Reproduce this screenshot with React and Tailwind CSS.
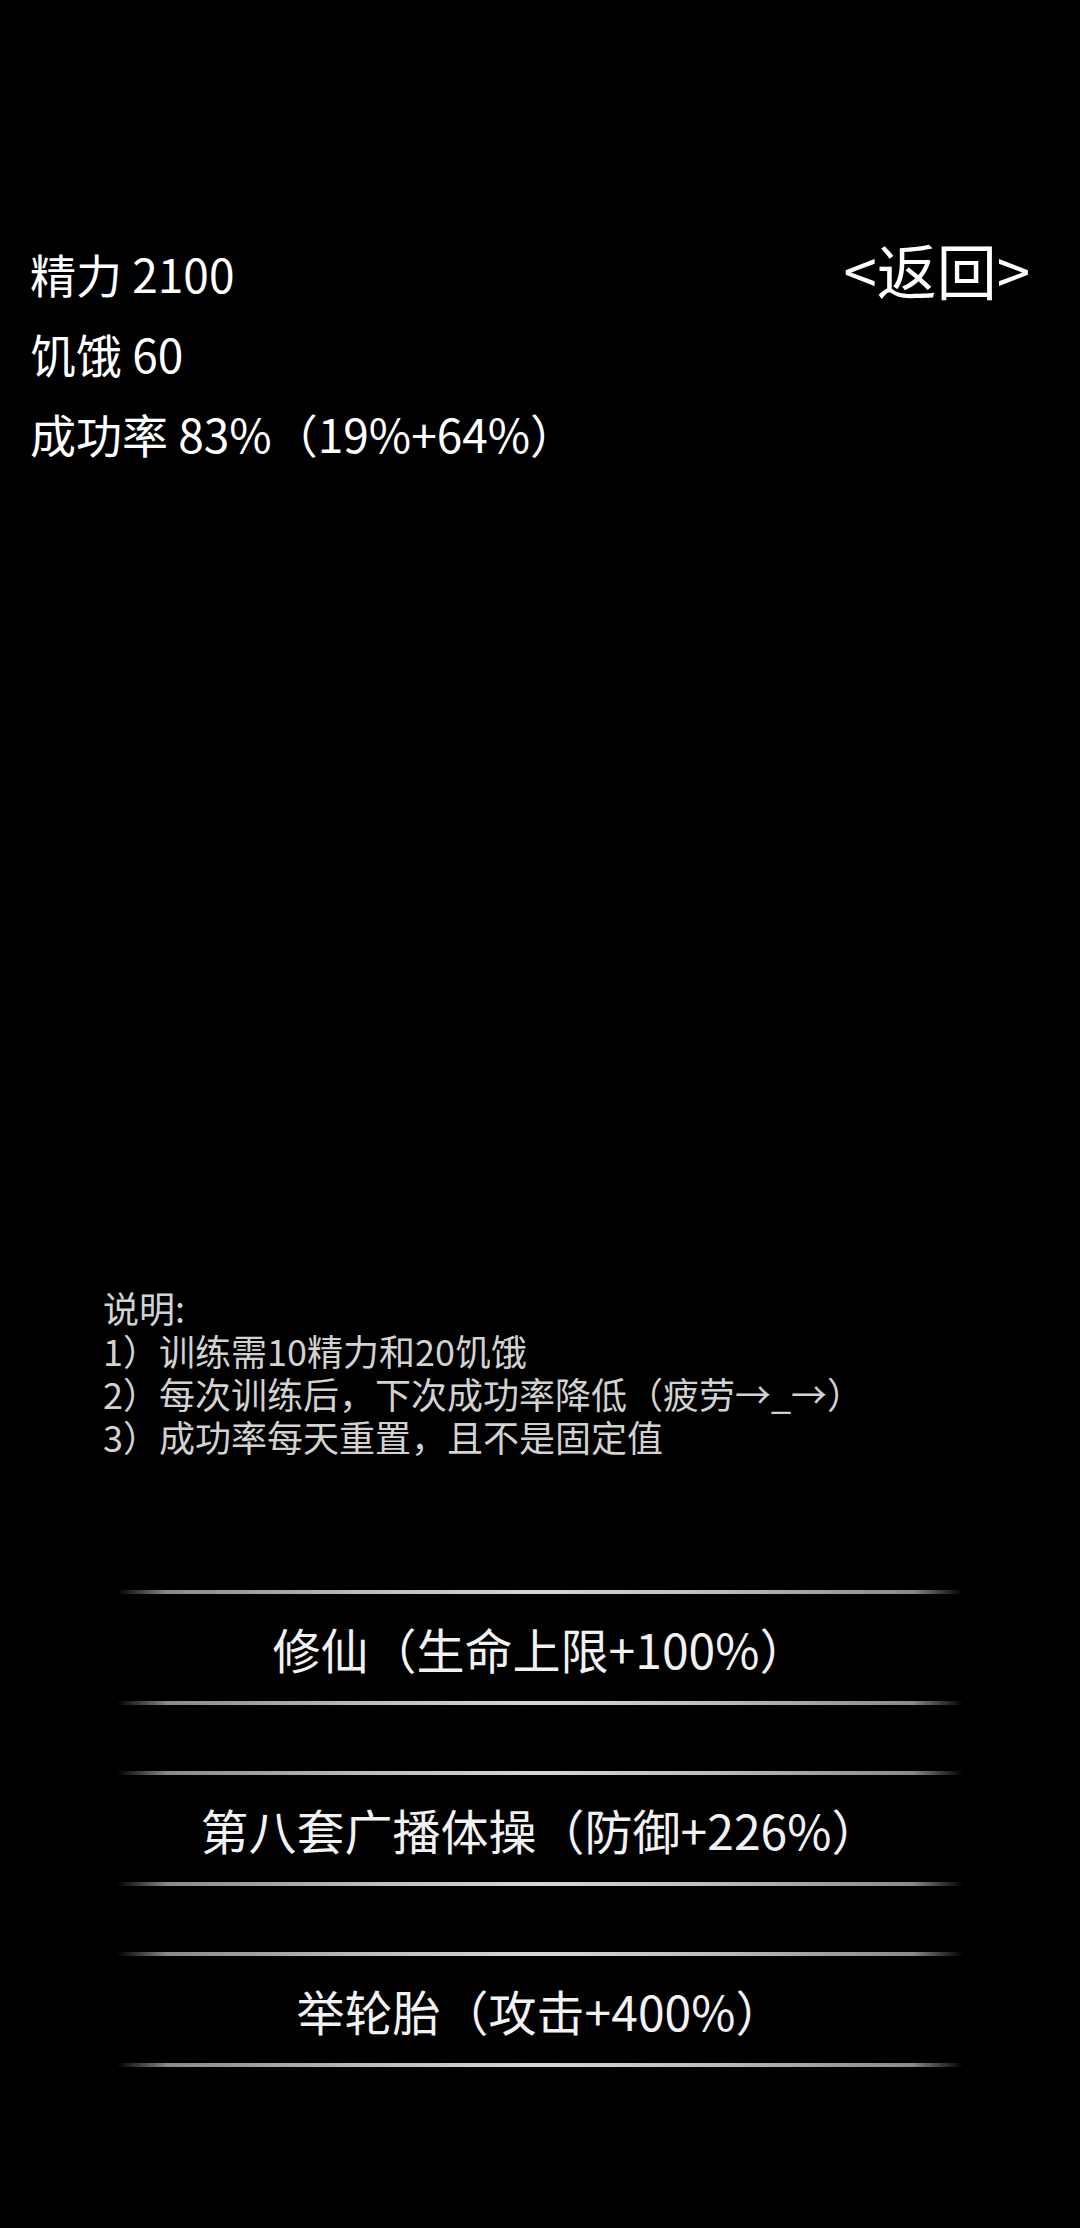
import React from 'react'

const font = { fontFamily: '"Noto Sans CJK SC", "Noto Sans", sans-serif' }

const stats = ['精力 2100', '饥饿 60', '成功率 83%（19%+64%）']

const notes = [
  '说明:',
  '1）训练需10精力和20饥饿',
  '2）每次训练后，下次成功率降低（疲劳→_→）',
  '3）成功率每天重置，且不是固定值',
]

const trainings = ['修仙（生命上限+100%）', '第八套广播体操（防御+226%）', '举轮胎（攻击+400%）']

function Rule() {
  return (
    <div className="mx-auto h-[4px] w-[846px] bg-[linear-gradient(to_right,transparent_0%,#8a8a8a_6%,#bdbdbd_30%,#d6d6d6_50%,#bdbdbd_70%,#8a8a8a_94%,transparent_100%)] blur-[0.6px]" />
  )
}

function TrainButton({ label }) {
  return (
    <button className="block w-full text-center">
      <Rule />
      <div className="flex h-[107px] items-center justify-center text-[48px] text-[#f2f2f2]">{label}</div>
      <Rule />
    </button>
  )
}

export default function App() {
  return (
    <div className="min-h-[2228px] w-full overflow-hidden bg-black" style={font}>
      <div className="flex items-start justify-between pl-[30px] pr-[50px] pt-[233px]">
        <div className="text-[46px] leading-[80px] text-white">
          {stats.map((s) => (
            <div key={s}>{s}</div>
          ))}
        </div>
        <div className="-mt-[4px] text-[60px] leading-[80px] text-white">&lt;返回&gt;</div>
      </div>

      <div className="mt-[813px] pl-[103px] text-[36px] leading-[43px] text-[#d2d2d2]">
        {notes.map((n) => (
          <div key={n}>{n}</div>
        ))}
      </div>

      <div className="mt-[132px] flex flex-col gap-[66px]">
        {trainings.map((t) => (
          <TrainButton key={t} label={t} />
        ))}
      </div>
    </div>
  )
}
